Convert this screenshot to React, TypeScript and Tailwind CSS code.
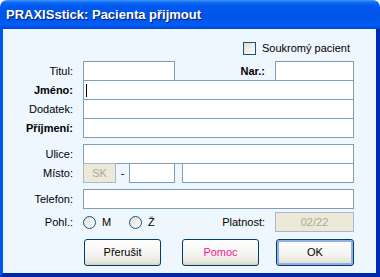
import React from 'react';

const font = { fontFamily: '"Liberation Sans", Arial, sans-serif' };

const Field: React.FC<{ w: string; disabled?: boolean; value?: string; caret?: boolean }> = ({ w, disabled, value, caret }) => (
  <div
    className={`${w} h-[20px] flex items-center justify-center border ${
      disabled ? 'bg-[#ece9d8] border-[#a9b7c7] text-[#aca899]' : 'bg-white border-[#7f9db9]'
    } relative`}
  >
    {value}
    {caret && <span className="absolute left-[2px] top-[3px] w-px h-[13px] bg-black" />}
  </div>
);

const Label: React.FC<{ text: string; bold?: boolean; w?: string }> = ({ text, bold, w = 'w-[70px]' }) => (
  <div className={`${w} text-right mr-[10px] ${bold ? 'font-bold' : ''}`}>{text}</div>
);

const Radio: React.FC<{ label: string; w: string }> = ({ label, w }) => (
  <div className={`${w} flex items-center`}>
    <span className="w-[13px] h-[13px] rounded-full border border-[#1c5180] bg-[linear-gradient(135deg,#dcdcd7,#ffffff)]" />
    <span className="ml-[6px]">{label}</span>
  </div>
);

const Button: React.FC<{ text: string; w: string; className?: string; def?: boolean; color?: string }> = ({ text, w, className = '', def, color = 'text-black' }) => (
  <div
    className={`${w} h-[27px] flex items-center justify-center rounded-[3px] border border-[#003c74] bg-[linear-gradient(to_bottom,#ffffff,#f3f3ef_60%,#e6e3d6_90%,#d6d0c5)] ${
      def ? 'shadow-[inset_0_0_0_2px_#8fb0ea]' : ''
    } ${color} ${className}`}
  >
    {text}
  </div>
);

export default function App() {
  return (
    <div className="w-[380px] h-[277px] flex flex-col text-[11px] text-black select-none" style={font}>
      <div className="h-[29px] shrink-0 rounded-t-[7px] flex items-center pl-[6px] pt-[1px] bg-[linear-gradient(to_bottom,#3d95ff_0%,#0a66f3_10%,#0058ee_22%,#0054e6_55%,#005cf5_85%,#0046db_100%)]">
        <span className="text-white font-bold text-[13px] [text-shadow:1px_1px_0_#0a1e6a]">PRAXISstick: Pacienta přijmout</span>
      </div>
      <div className="flex-1 bg-[#eef6fe] border-l-[3px] border-l-[#0055ea] border-r-[4px] border-r-[#0029b8] border-b-[4px] border-b-[#0026b0]">
        <div className="w-[351px] flex flex-col">
          <div className="mt-[13px] ml-[240px] h-[13px] flex items-center">
            <span className="w-[13px] h-[13px] border border-[#1c5180] bg-[linear-gradient(135deg,#dcdcd7,#ffffff)]" />
            <span className="ml-[6px]">Soukromý pacient</span>
          </div>

          <div className="mt-[6px] h-[20px] flex items-center">
            <Label text="Titul:" />
            <Field w="w-[92px]" />
            <Label text="Nar.:" bold w="w-[90px]" />
            <Field w="w-[79px]" />
          </div>
          <div className="-mt-px h-[20px] flex items-center">
            <Label text="Jméno:" bold />
            <Field w="w-[271px]" caret />
          </div>
          <div className="-mt-px h-[20px] flex items-center">
            <Label text="Dodatek:" />
            <Field w="w-[271px]" />
          </div>
          <div className="-mt-px h-[20px] flex items-center">
            <Label text="Příjmení:" bold />
            <Field w="w-[271px]" />
          </div>

          <div className="mt-[6px] h-[20px] flex items-center">
            <Label text="Ulice:" />
            <Field w="w-[271px]" />
          </div>
          <div className="-mt-px h-[20px] flex items-center">
            <Label text="Místo:" />
            <Field w="w-[33px]" disabled value="SK" />
            <span className="w-[13px] text-center">-</span>
            <Field w="w-[46px]" />
            <div className="w-[7px]" />
            <Field w="w-[172px]" />
          </div>

          <div className="mt-[6px] h-[20px] flex items-center">
            <Label text="Telefon:" />
            <Field w="w-[271px]" />
          </div>

          <div className="mt-[3px] h-[20px] flex items-center">
            <Label text="Pohl.:" />
            <Radio label="M" w="w-[46px]" />
            <Radio label="Ž" w="w-[46px]" />
            <Label text="Platnost:" w="w-[90px]" />
            <Field w="w-[79px]" disabled value="02/22" />
          </div>

          <div className="mt-[7px] flex items-center">
            <Button text="Přerušit" w="w-[77px]" className="ml-[81px]" />
            <Button text="Pomoc" w="w-[77px]" className="ml-[21px]" color="text-[#ff1493]" />
            <Button text="OK" w="w-[78px]" className="ml-[17px]" def />
          </div>
        </div>
      </div>
    </div>
  );
}
